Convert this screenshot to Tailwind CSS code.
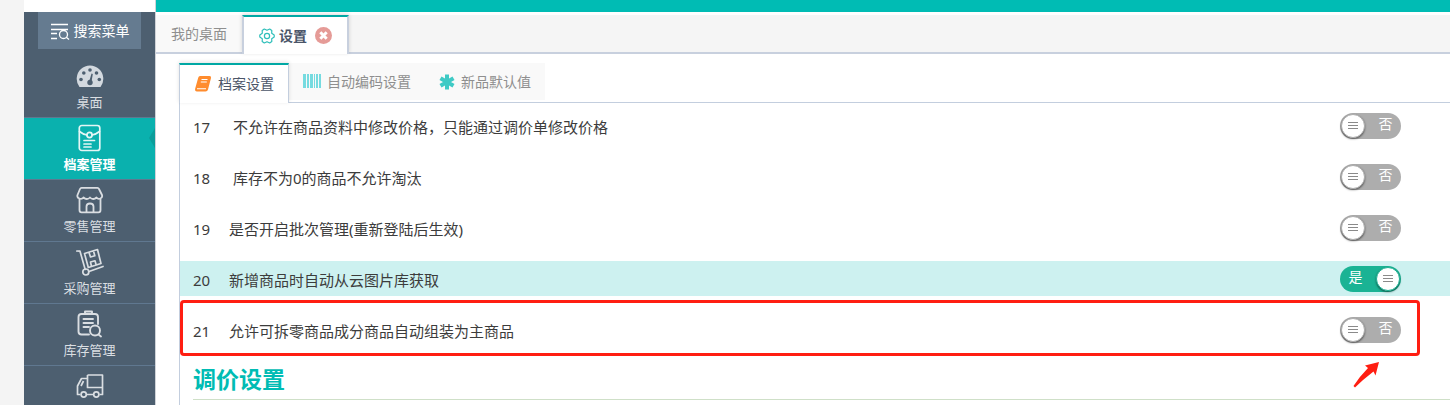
<!doctype html>
<html lang="zh-CN">
  <head>
    <meta charset="UTF-8" />
    <meta name="viewport" content="width=device-width, initial-scale=1.0" />
    <title>设置</title>
    <script src="https://cdn.jsdelivr.net/npm/@tailwindcss/browser@4"></script>
  </head>
  <body class="flex h-screen overflow-hidden bg-[#f4f4f4] pl-6 font-['Noto_Sans','Noto_Sans_CJK_SC',sans-serif] text-[#3c3c3c]">
    <!-- Sidebar -->
    <aside class="flex w-[132px] shrink-0 flex-col overflow-hidden border-r border-[#d0d3d8] bg-[#4d5f70] text-[13px] leading-[18px] text-[#dadee2]">
      <div class="h-3 shrink-0 bg-white"></div>
      <button type="button" class="mx-3.5 flex h-[37px] shrink-0 items-center justify-center gap-1 bg-[#657b90] text-sm text-white">
        <svg class="h-5 w-5" viewBox="0 0 20 20" fill="none" stroke="currentColor" stroke-width="1.300">
          <path d="M1 3.500h17M1 8.500h17M1 12.500h6M1 17.500h6" />
          <circle cx="13.500" cy="13.500" r="4" />
          <path d="M16.300 16.300L19 18.500" />
        </svg>
        搜索菜单
      </button>
      <nav class="mt-[7px] flex flex-col">
        <a href="#" class="flex h-[62px] flex-col items-center gap-[3px] border-b border-[#607890] pt-1.5">
          <svg class="h-7 w-7" viewBox="0 0 28 28">
            <path fill="#d3d9df" d="M3.500 25A13.300 13.300 0 1 1 24.500 25Z" />
            <g fill="#4d5f70">
              <circle cx="14" cy="8" r="1.800" />
              <circle cx="7.800" cy="11" r="1.800" />
              <circle cx="20.500" cy="11" r="1.800" />
              <circle cx="5" cy="17.500" r="1.800" />
              <circle cx="23.300" cy="17.500" r="1.800" />
              <circle cx="14" cy="20.500" r="2.700" />
              <path d="M13 20L15.500 11.500L16.800 12L15.500 20Z" />
            </g>
          </svg>
          桌面
        </a>
        <a href="#" class="relative flex h-[62px] flex-col items-center gap-[3px] border-b border-[#607890] bg-[#0ab1ae] pt-1.5 font-bold text-white">
          <svg class="h-7 w-7" viewBox="0 0 28 28" fill="none" stroke="#e4f6f5" stroke-width="1.700" stroke-linecap="round">
            <rect x="3.300" y="1.500" width="20.500" height="25" rx="2.500" />
            <path d="M3.500 7.500C6 9.500 8 10.500 11 11M23.500 7.500C21 9.500 19 10.500 16 11M8 16.500h10.500M8 20h7M8 23h7" />
            <circle cx="13.500" cy="11" r="2.600" />
          </svg>
          档案管理
          <svg class="absolute top-2.5 right-0 h-5 w-1.5" viewBox="0 0 6 20" fill="#0b9d9a"><path d="M6 0L0 10L6 20Z" /></svg>
        </a>
        <a href="#" class="flex h-[62px] flex-col items-center gap-[3px] border-b border-[#607890] pt-1.5">
          <svg class="h-7 w-7" viewBox="0 0 28 28" fill="none" stroke="currentColor" stroke-width="1.800" stroke-linejoin="round">
            <path d="M5.500 1.800H21.500Q22.500 1.800 23 3L26 9C27 12.500 22.500 14 20.500 11.500C18.500 13.500 15.800 13.500 14 11.500C12.200 13.500 9.500 13.500 7.500 11.500C5.500 14 .5 12.500 1.500 9L4 3Q4.500 1.800 5.500 1.800Z" />
            <path d="M3.500 13V24Q3.500 26.300 5.500 26.300H22.500Q24.500 26.300 24.500 24V13M10.500 26.300V20.500Q10.500 17.500 14 17.500Q17.500 17.500 17.500 20.500V26.300" />
          </svg>
          零售管理
        </a>
        <a href="#" class="flex h-[62px] flex-col items-center gap-[3px] border-b border-[#607890] pt-1.5">
          <svg class="h-7 w-7" viewBox="0 0 28 28" fill="none" stroke="currentColor" stroke-width="1.700" stroke-linecap="round" stroke-linejoin="round">
            <path d="M.8 3L4 3.200L9.200 21.500M13 23.500L27 18.500" />
            <circle cx="9.800" cy="24" r="3" />
            <path d="M8.500 5.500L21.500 1.500L25 15.500L12.300 19.500ZM13 4.500L14.500 9L18.800 7.800L17.500 3M15.500 18.500L14.500 14L19 12.800L20.200 17" />
          </svg>
          采购管理
        </a>
        <a href="#" class="flex h-[62px] flex-col items-center gap-[3px] border-b border-[#607890] pt-1.5">
          <svg class="h-7 w-7" viewBox="0 0 28 28" fill="none" stroke="currentColor" stroke-width="1.900" stroke-linecap="round" stroke-linejoin="round">
            <path d="M13 24.500H5.500Q2.500 24.500 2.500 21.500V7Q2.500 4 5.500 4H19Q22 4 22 7V14M9 4V1.500H16V4M7.500 9h9.500M7.500 13h9.500M7.500 17h5.500" />
            <circle cx="19" cy="20.500" r="5" />
            <path d="M22.500 24.500L25 26.500" />
          </svg>
          库存管理
        </a>
        <a href="#" aria-label="配送管理" class="flex h-[62px] flex-col items-center gap-[3px] pt-1.5">
          <svg class="h-7 w-7" viewBox="0 0 28 28" fill="none" stroke="currentColor" stroke-width="1.700" stroke-linejoin="round">
            <path d="M11.500 3H26.500V22.500H23.500M11.500 3V15.500H26.500M11.500 6.500H5.500L1.500 14V22.500H4.500M11 22.500H17M7.500 9L5 14" />
            <circle cx="7.700" cy="22.500" r="2.600" />
            <circle cx="20.300" cy="22.500" r="2.600" />
          </svg>
        </a>
      </nav>
    </aside>

    <main class="flex min-w-0 flex-1 flex-col overflow-hidden bg-white">
      <div class="h-3 shrink-0 bg-[#00bcb4]"></div>

      <!-- Page tabs -->
      <div class="mt-[3px] flex h-[39px] shrink-0 items-end border-b-2 border-[#c8d0de] bg-[#f5f5f5] text-sm">
        <button type="button" class="h-full bg-[#f9f9f9] px-[15px] text-[#8f8f8f]">我的桌面</button>
        <div class="relative -mb-0.5 flex h-[39px] items-center border-x-2 border-t-2 border-x-[#c8d0de] border-t-[#00a8a4] bg-white px-[15px] shadow-[0_-1px_4px_rgba(0,0,0,0.15)]">
          <button type="button" class="flex items-center gap-1 font-bold text-[#4b5568]">
            <svg class="h-4 w-4" viewBox="0 0 16 16" fill="none" stroke="#2fbfba" stroke-width="1.200" stroke-linejoin="round">
              <path d="M5.300 1L8 2.300L10.700 1L12.800 2.500L12.700 5.300L15.200 7L15.200 9L12.700 10.700L12.800 13.500L10.700 15L8 13.700L5.300 15L3.200 13.500L3.300 10.700L.8 9L.8 7L3.300 5.300L3.200 2.500Z" />
              <circle cx="8" cy="8" r="2.600" />
            </svg>
            设置
          </button>
          <button type="button" aria-label="关闭" class="ml-2">
            <svg class="h-[17px] w-[17px]" viewBox="0 0 16 16">
              <circle cx="8" cy="8" r="8" fill="#e59b97" />
              <path d="M5 5L11 11M11 5L5 11" stroke="#fff" stroke-width="2.800" />
            </svg>
          </button>
        </div>
      </div>

      <!-- Settings tabs -->
      <div class="mt-[9px] ml-[23px] flex h-10 shrink-0 items-start border-b border-[#c3cede] text-sm">
        <button type="button" class="relative flex h-10 items-center gap-1.5 border-x border-t-2 border-x-[#c3cede] border-t-[#00a8a4] bg-white pr-3.5 pl-3.5 text-[#4b5568] shadow-[0_-1px_4px_rgba(0,0,0,0.12)]">
          <svg class="h-[18px] w-[18px]" viewBox="0 0 18 18">
            <path fill="#ff8c2e" d="M6 1H15.500Q17.500 1 17 3L14 14.500Q13.500 16.500 11.500 16.500H3Q.5 16.500 1.200 13.500L4.200 2.800Q4.700 1 6 1Z" />
            <path d="M7.500 4.500h6M6.800 7h6M3 13.700h9" fill="none" stroke="#fff" stroke-width="1.100" />
          </svg>
          档案设置
        </button>
        <button type="button" class="flex h-[37px] items-center gap-1.5 bg-[#f9f9f9] px-3.5 text-[#8f8f8f]">
          <svg class="h-4 w-[18px]" viewBox="0 0 18 16" fill="#76dbe0">
            <path d="M0 0h3v14H0zM4 0h2v14H4zM7 0h3v14H7zM11 0h1v14h-1zM13 0h2v14h-2zM16 0h2v14h-2z" />
          </svg>
          自动编码设置
        </button>
        <button type="button" class="flex h-[37px] items-center gap-1.5 bg-[#f9f9f9] px-3.5 text-[#8f8f8f]">
          <svg class="h-4 w-4" viewBox="0 0 16 16" stroke="#3fcac5" stroke-width="4">
            <path d="M8 .5V15.500M1.500 4.200L14.500 11.800M14.500 4.200L1.500 11.800" />
          </svg>
          新品默认值
        </button>
      </div>

      <section class="ml-[23px] flex-1 border-l border-[#c3cede] pt-[5px]">
        <ul class="flex flex-col gap-4 text-[15px] leading-5">
          <li class="flex h-[35px] items-center pr-[49px] pl-[13px]">
            <span class="w-9 pt-0.5">17</span>
            <label for="opt17" class="flex-1 pt-0.5 pl-1">不允许在商品资料中修改价格，只能通过调价单修改价格</label>
            <label class="group relative flex h-[26px] w-[61px] items-center rounded-full bg-[#adadad] px-px text-sm text-white has-checked:flex-row-reverse has-checked:bg-[#1ab394]">
              <input id="opt17" type="checkbox" role="switch" class="sr-only" />
              <span class="flex size-6 items-center justify-center rounded-full border border-[#adadad] bg-white shadow-[0_1px_2px_rgba(0,0,0,0.5)] group-has-checked:border-[#1ab394]">
                <svg class="h-3 w-3" viewBox="0 0 12 12" stroke="#8a8a8a"><path d="M1 2.500h10M1 5.500h10M1 8.500h10" /></svg>
              </span>
              <span class="flex-1 pb-1 pl-1.5 text-center group-has-checked:hidden">否</span>
              <span class="hidden flex-1 pr-1.5 pb-1 text-center group-has-checked:block">是</span>
            </label>
          </li>
          <li class="flex h-[35px] items-center pr-[49px] pl-[13px]">
            <span class="w-9 pt-0.5">18</span>
            <label for="opt18" class="flex-1 pt-0.5 pl-1">库存不为0的商品不允许淘汰</label>
            <label class="group relative flex h-[26px] w-[61px] items-center rounded-full bg-[#adadad] px-px text-sm text-white has-checked:flex-row-reverse has-checked:bg-[#1ab394]">
              <input id="opt18" type="checkbox" role="switch" class="sr-only" />
              <span class="flex size-6 items-center justify-center rounded-full border border-[#adadad] bg-white shadow-[0_1px_2px_rgba(0,0,0,0.5)] group-has-checked:border-[#1ab394]">
                <svg class="h-3 w-3" viewBox="0 0 12 12" stroke="#8a8a8a"><path d="M1 2.500h10M1 5.500h10M1 8.500h10" /></svg>
              </span>
              <span class="flex-1 pb-1 pl-1.5 text-center group-has-checked:hidden">否</span>
              <span class="hidden flex-1 pr-1.5 pb-1 text-center group-has-checked:block">是</span>
            </label>
          </li>
          <li class="flex h-[35px] items-center pr-[49px] pl-[13px]">
            <span class="w-9 pt-0.5">19</span>
            <label for="opt19" class="flex-1 pt-0.5">是否开启批次管理(重新登陆后生效)</label>
            <label class="group relative flex h-[26px] w-[61px] items-center rounded-full bg-[#adadad] px-px text-sm text-white has-checked:flex-row-reverse has-checked:bg-[#1ab394]">
              <input id="opt19" type="checkbox" role="switch" class="sr-only" />
              <span class="flex size-6 items-center justify-center rounded-full border border-[#adadad] bg-white shadow-[0_1px_2px_rgba(0,0,0,0.5)] group-has-checked:border-[#1ab394]">
                <svg class="h-3 w-3" viewBox="0 0 12 12" stroke="#8a8a8a"><path d="M1 2.500h10M1 5.500h10M1 8.500h10" /></svg>
              </span>
              <span class="flex-1 pb-1 pl-1.5 text-center group-has-checked:hidden">否</span>
              <span class="hidden flex-1 pr-1.5 pb-1 text-center group-has-checked:block">是</span>
            </label>
          </li>
          <li class="flex h-[35px] items-center bg-[#cdf1f0] pr-[49px] pl-[13px]">
            <span class="w-9 pt-0.5">20</span>
            <label for="opt20" class="flex-1 pt-0.5">新增商品时自动从云图片库获取</label>
            <label class="group relative flex h-[26px] w-[61px] items-center rounded-full bg-[#adadad] px-px text-sm text-white has-checked:flex-row-reverse has-checked:bg-[#1ab394]">
              <input id="opt20" type="checkbox" role="switch" checked class="sr-only" />
              <span class="flex size-6 items-center justify-center rounded-full border border-[#adadad] bg-white shadow-[0_1px_2px_rgba(0,0,0,0.5)] group-has-checked:border-[#1ab394]">
                <svg class="h-3 w-3" viewBox="0 0 12 12" stroke="#8a8a8a"><path d="M1 2.500h10M1 5.500h10M1 8.500h10" /></svg>
              </span>
              <span class="flex-1 pb-1 pl-1.5 text-center group-has-checked:hidden">否</span>
              <span class="hidden flex-1 pr-1.5 pb-1 text-center group-has-checked:block">是</span>
            </label>
          </li>
          <li class="relative flex h-[35px] items-center pr-[49px] pl-[13px]">
            <span class="w-9 pt-0.5">21</span>
            <label for="opt21" class="flex-1 pt-0.5">允许可拆零商品成分商品自动组装为主商品</label>
            <label class="group relative flex h-[26px] w-[61px] items-center rounded-full bg-[#adadad] px-px text-sm text-white has-checked:flex-row-reverse has-checked:bg-[#1ab394]">
              <input id="opt21" type="checkbox" role="switch" class="sr-only" />
              <span class="flex size-6 items-center justify-center rounded-full border border-[#adadad] bg-white shadow-[0_1px_2px_rgba(0,0,0,0.5)] group-has-checked:border-[#1ab394]">
                <svg class="h-3 w-3" viewBox="0 0 12 12" stroke="#8a8a8a"><path d="M1 2.500h10M1 5.500h10M1 8.500h10" /></svg>
              </span>
              <span class="flex-1 pb-1 pl-1.5 text-center group-has-checked:hidden">否</span>
              <span class="hidden flex-1 pr-1.5 pb-1 text-center group-has-checked:block">是</span>
            </label>
            <!-- Highlight frame and arrow -->
            <div class="pointer-events-none absolute -top-3 right-[30px] -bottom-[9px] left-0 rounded-sm border-3 border-[#ff1e12]"></div>
            <svg class="pointer-events-none absolute top-[49px] right-[70px] h-7 w-7" viewBox="0 0 28 28" fill="#ff1e12">
              <path d="M27 1L13 4.500L16 7Q8 15 1.500 25L3 26.500Q11 18.500 21.500 10.500L23.500 14.500Z" />
            </svg>
          </li>
        </ul>
        <h2 class="mt-[17px] ml-[13px] border-b border-[#cfe0c8] pb-1 text-[23px] leading-[31px] font-bold text-[#00bcb4]">调价设置</h2>
      </section>
    </main>
  </body>
</html>
